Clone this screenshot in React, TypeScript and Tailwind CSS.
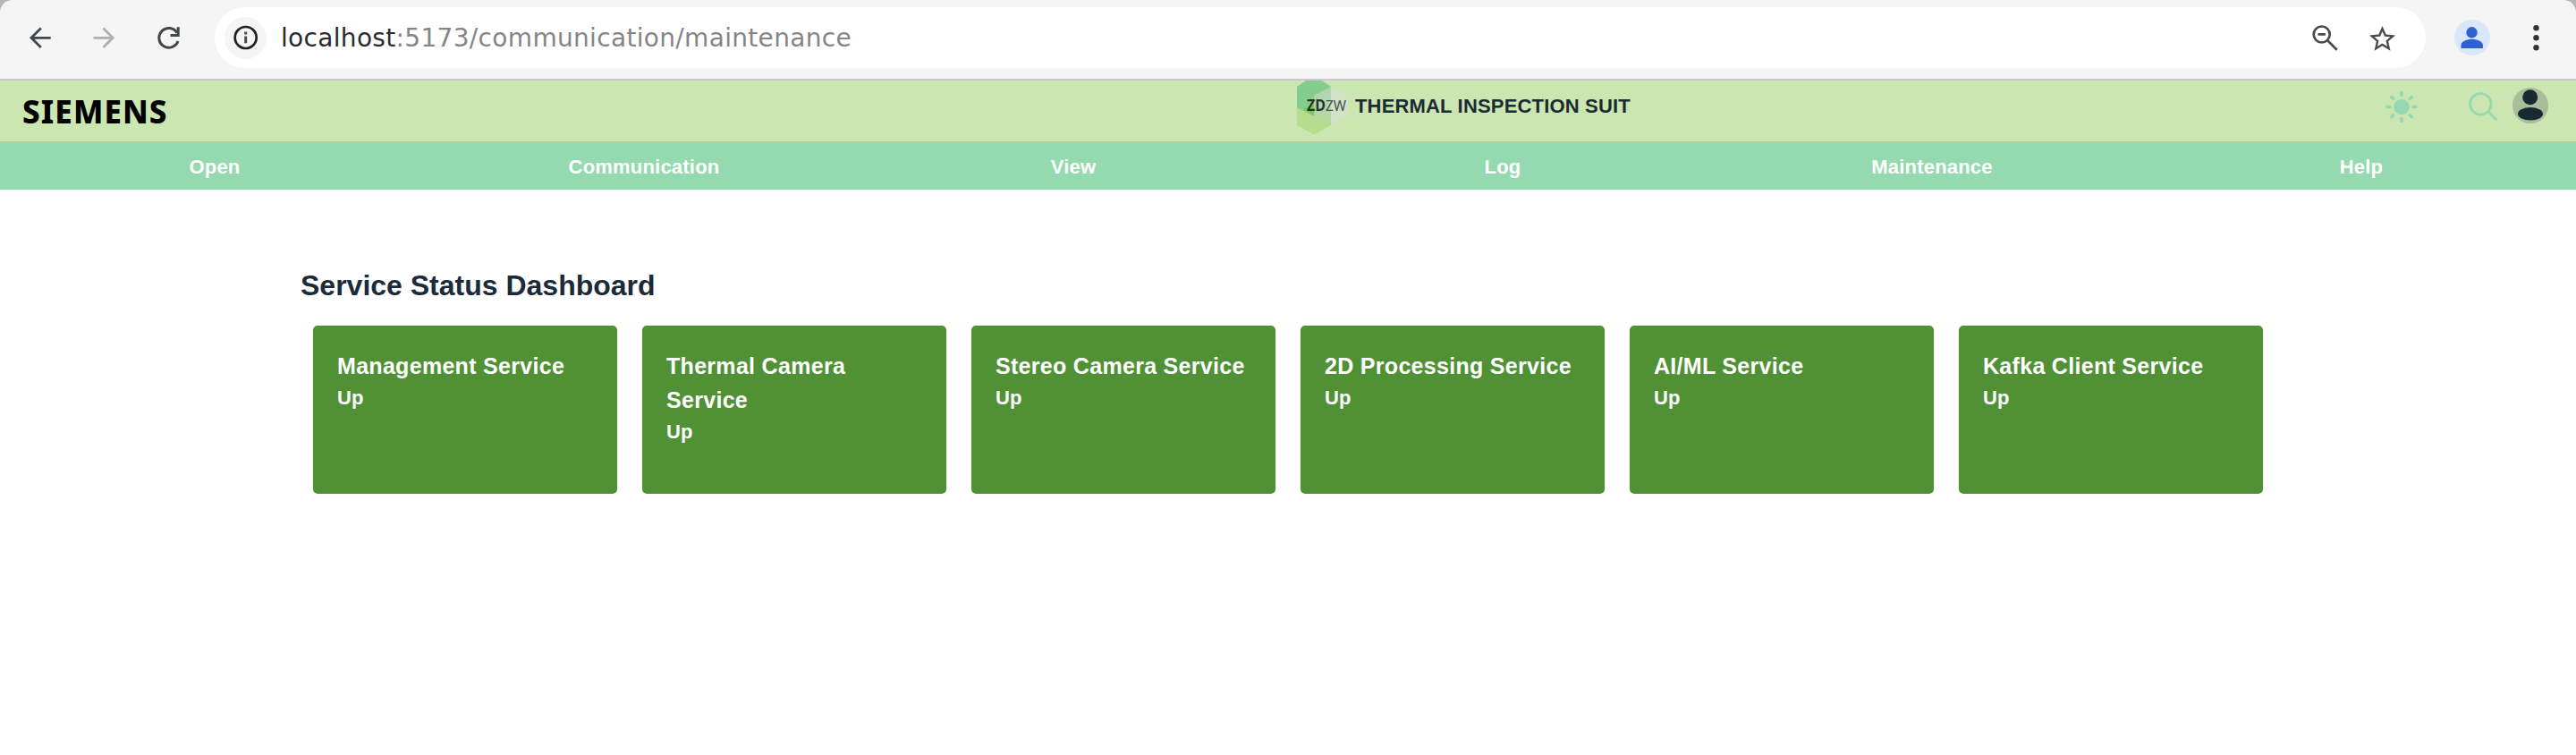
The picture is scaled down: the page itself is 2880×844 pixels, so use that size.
const menu = ['Open', 'Communication', 'View', 'Log', 'Maintenance', 'Help'];

const services = [
  'Management Service',
  'Thermal Camera Service',
  'Stereo Camera Service',
  '2D Processing Service',
  'AI/ML Service',
  'Kafka Client Service',
];

function BrowserBar() {
  return (
    <div className="flex h-[90px] items-start border-b-2 border-[#cbc8cb] bg-[#b9b7b4]">
      <div className="flex h-[88px] w-full items-start rounded-t-[14px] bg-[#f5f5f5] pt-2">
        <div className="flex h-[68px] w-[240px] shrink-0 items-center pl-[31px]">
          <svg className="h-7 w-7" viewBox="0 0 28 28" fill="none" stroke="#43474a" strokeWidth="2.800">
            <path d="M25.700 14.300H4M14.800 3.500L4 14.300l10.800 10.800" />
          </svg>
          <svg className="ml-[45px] h-7 w-7" viewBox="0 0 28 28" fill="none" stroke="#b0b0b0" strokeWidth="2.800">
            <path d="M.5 14.300H22.200M11.400 3.500l10.800 10.800-10.800 10.800" />
          </svg>
          <svg className="ml-[43px] h-7 w-7" viewBox="0 0 28 28" fill="none" stroke="#43474a" strokeWidth="3">
            <path d="M23 8.600A10.900 10.900 0 1 0 24 18" />
            <path d="M24.200 2.200v9.200H15.500" />
          </svg>
        </div>
        <div className="flex h-[68px] w-[2472px] shrink-0 items-center rounded-full bg-white pl-[11px]">
          <div className="flex h-[47px] w-[47px] items-center justify-center rounded-full bg-[#f5f5f5]">
            <svg className="h-7 w-7" viewBox="0 0 28 28" fill="none" stroke="#1f2022" strokeWidth="2.700">
              <circle cx="13.700" cy="14" r="12" />
              <path d="M13.700 12.600v7.700M13.700 7.500v3" strokeWidth="3" stroke="#4b4c4e" />
            </svg>
          </div>
          <div className="ml-4 pt-[2px] font-['DejaVu_Sans',sans-serif] text-[28px] leading-[34px] tracking-[0.32px] whitespace-pre text-[#858585]">
            <span className="text-[#2b2b2b]">localhost</span>:5173/communication/maintenance
          </div>
          <svg className="ml-auto h-8 w-8" viewBox="0 0 32 32" fill="none" stroke="#4a4a4a" strokeWidth="2.700">
            <circle cx="12.700" cy="12.500" r="9" />
            <path d="M19 19l10.700 10.700M8.500 12.300h8.400" />
          </svg>
          <svg className="mt-[2px] mr-[31px] ml-[31px] h-[35px] w-[35px]" viewBox="0 0 24 24" fill="#4a4a4a">
            <path d="M22 9.240l-7.190-.62L12 2 9.190 8.630 2 9.240l5.460 4.730L5.820 21 12 17.270 18.180 21l-1.630-7.030L22 9.240zM12 15.400l-3.760 2.270 1-4.280-3.320-2.880 4.380-.38L12 6.100l1.710 4.040 4.380.38-3.320 2.880 1 4.280L12 15.400z" />
          </svg>
        </div>
        <div className="flex h-[68px] items-center pl-8">
          <svg className="h-10 w-10" viewBox="0 0 40 40">
            <circle cx="20" cy="20" r="20" fill="#d9e6fb" />
            <circle cx="19.500" cy="14.300" r="6.200" fill="#2f62cc" />
            <path d="M7.500 32v-3.500c0-4.500 7-6.800 12.200-6.800s12.200 2.300 12.200 6.800V32z" fill="#2f62cc" />
          </svg>
          <svg className="ml-[47px] h-[30px] w-2" viewBox="0 0 8 30" fill="#303437">
            <circle cx="4.500" cy="4.200" r="3.200" />
            <circle cx="4.500" cy="15.300" r="3.200" />
            <circle cx="4.500" cy="26.300" r="3.200" />
          </svg>
        </div>
      </div>
    </div>
  );
}

function Header() {
  return (
    <header className="flex h-[70px] items-start border-b-2 border-[#b5cd9c] bg-[#cbe6b0]">
      <div className="w-[1450px] pt-[10px] pl-[25px] font-['Noto_Sans','Open_Sans',sans-serif] text-[35px] leading-[50px] font-extrabold tracking-[1.1px] text-black">
        SIEMENS
      </div>
      <svg className="h-[60px] w-[57px]" viewBox="0 0 57 60">
        <path d="M0 7L10 0h18l10 7v26L19 43 0 34z" fill="#84cd8c" />
        <path d="M0 30l19 10 19-10v20L19 60.500 0 50z" fill="#b6dc8d" />
        <path d="M19 17L38 7v26L19 40z" fill="#a7d4ae" />
        <path d="M19 17l19-10v43l-19-11z" fill="#b9d6b0" fillOpacity=".6" />
        <path d="M38 7l18.500 10v22L38 50z" fill="#d3e1c6" />
        <path d="M19 26v13l-12-7z" fill="#79c957" />
        <text x="11" y="34" fontFamily="Noto Sans, sans-serif" fontSize="17" fontWeight="700" fill="#25352a" textLength="21" lengthAdjust="spacingAndGlyphs">ZD</text>
        <text x="32" y="34" fontFamily="Noto Sans, sans-serif" fontSize="17" fontWeight="400" fill="#46524a" textLength="23" lengthAdjust="spacingAndGlyphs">ZW</text>
      </svg>
      <div className="pt-[13px] pl-2 text-[22px] leading-8 font-bold tracking-[0.17px] text-[#1b2b34]">THERMAL INSPECTION SUIT</div>
      <div className="ml-auto flex pt-2 pr-[31px]">
        <svg className="mt-[3px] h-9 w-9" viewBox="0 0 36 36" stroke="#95d9b0" strokeWidth="3.600" strokeLinecap="round">
          <circle cx="18" cy="18.500" r="8.800" fill="#95d9b0" stroke="none" />
          <path d="M18 2.500v3M18 31.500v3M2 18.500h3M31 18.500h3M6.900 7.400l1.900 1.900M27.200 27.700l1.900 1.900M6.900 29.600l1.900-1.900M27.200 9.300l1.900-1.900" />
        </svg>
        <svg className="mt-[5px] ml-[57px] h-8 w-8" viewBox="0 0 32 32" fill="none" stroke="#95d9b0" strokeWidth="2.700">
          <circle cx="13.300" cy="13.300" r="11.800" />
          <path d="M21.800 21.800l9.400 9.400" />
        </svg>
        <svg className="ml-[17px] h-10 w-10" viewBox="0 0 40 40">
          <circle cx="20" cy="20" r="20" fill="#a8bd98" />
          <circle cx="19.700" cy="10.700" r="8.500" fill="#182b33" />
          <ellipse cx="20" cy="29.300" rx="14" ry="7.200" fill="#182b33" />
        </svg>
      </div>
    </header>
  );
}

export default function App() {
  return (
    <div className="h-[844px] w-[2880px] overflow-hidden bg-white font-['Liberation_Sans',Arial,sans-serif]">
      <BrowserBar />
      <Header />
      <nav className="grid h-[52px] grid-cols-6 items-center bg-[#95d9b0] pt-[2px] text-center text-[22px] leading-8 font-bold tracking-[0.2px] text-white">
        {menu.map((item) => (
          <a key={item}>{item}</a>
        ))}
      </nav>
      <main className="px-[336px] pt-[86px]">
        <h1 className="text-[32px] leading-[42px] font-bold text-[#1b2b3a]">Service Status Dashboard</h1>
        <div className="mt-6 flex gap-7 pl-[14px]">
          {services.map((name) => (
            <section key={name} className="h-[188px] w-[340px] shrink-0 rounded-[5px] bg-[#519135] px-[27px] pt-[26px] text-white">
              <h2 className="text-[25px] leading-[38px] font-bold tracking-[0.3px]">{name}</h2>
              <p className="text-[22px] leading-[33px] font-bold">Up</p>
            </section>
          ))}
        </div>
      </main>
    </div>
  );
}
